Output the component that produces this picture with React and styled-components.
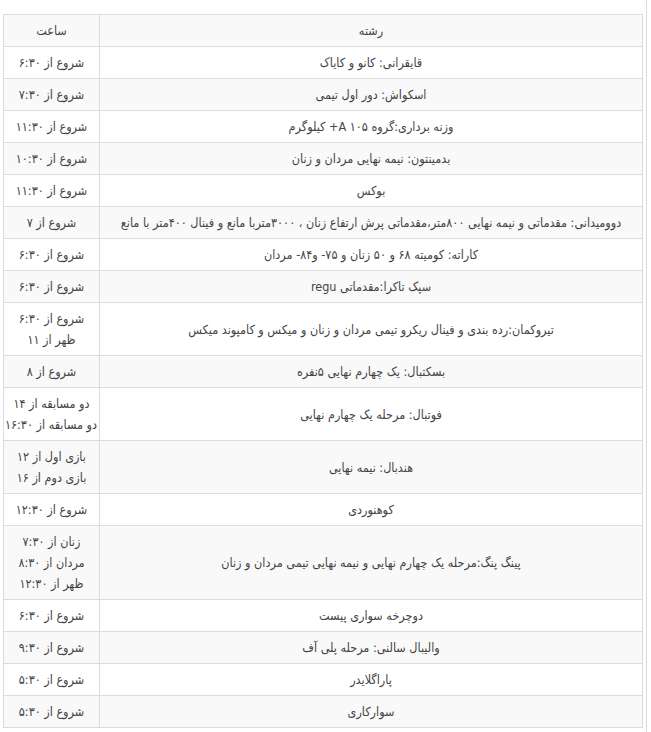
import React from "react";
import styled, { createGlobalStyle } from "styled-components";

const Global = createGlobalStyle`
  html, body { margin: 0; padding: 0; background: #fff; }
  body { font-family: "DejaVu Sans Condensed", "DejaVu Sans", sans-serif; }
`;

const Page = styled.div`
  width: 647px;
  min-height: 732px;
  box-sizing: border-box;
  border-right: 1px solid #dcdcdc;
  padding: 14px 4px 0 3px;
`;

const Table = styled.table`
  direction: rtl;
  width: 640px;
  table-layout: fixed;
  border-collapse: collapse;
  border: 1px solid #dcdcdc;
  font-size: 12.5px;
  color: #444;
`;

const TimeCol = styled.col`
  width: 96px;
`;

const Row = styled.tr`
  background: ${(p) => (p.$shade ? "#f9f9f9" : "#fff")};
`;

const Cell = styled.td`
  border: 1px solid #dcdcdc;
  padding: 5px 2px;
  line-height: 21px;
  text-align: center;
  vertical-align: middle;
  white-space: nowrap;
`;

const HeadCell = styled(Cell).attrs({ as: "th" })`
  font-weight: normal;
`;

const Line = styled.div``;

const rows = [
  ["قایقرانی: کانو و کایاک", ["شروع از ۶:۳۰"]],
  ["اسکواش: دور اول تیمی", ["شروع از ۷:۳۰"]],
  ["وزنه برداری:گروه ۱۰۵ A+ کیلوگرم", ["شروع از ۱۱:۳۰"]],
  ["بدمینتون: نیمه نهایی مردان و زنان", ["شروع از ۱۰:۳۰"]],
  ["بوکس", ["شروع از ۱۱:۳۰"]],
  [
    "دوومیدانی: مقدماتی و نیمه نهایی ۸۰۰متر،مقدماتی پرش ارتفاع زنان ، ۳۰۰۰متربا مانع و فینال ۴۰۰متر با مانع",
    ["شروع از ۷"],
  ],
  ["کاراته: کومیته ۶۸ و ۵۰ زنان و ۷۵- و۸۴- مردان", ["شروع از ۶:۳۰"]],
  ["سپک تاکرا:مقدماتی regu", ["شروع از ۶:۳۰"]],
  [
    "تیروکمان:رده بندی و فینال ریکرو تیمی مردان و زنان و میکس و کامپوند میکس",
    ["شروع از ۶:۳۰", "ظهر از ۱۱"],
  ],
  ["بسکتبال: یک چهارم نهایی ۵نفره", ["شروع از ۸"]],
  ["فوتبال: مرحله یک چهارم نهایی", ["دو مسابقه از ۱۴", "دو مسابقه از ۱۶:۳۰"]],
  ["هندبال: نیمه نهایی", ["بازی اول از ۱۲", "بازی دوم از ۱۶"]],
  ["کوهنوردی", ["شروع از ۱۲:۳۰"]],
  [
    "پینگ پنگ:مرحله یک چهارم نهایی و نیمه نهایی تیمی مردان و زنان",
    ["زنان از ۷:۳۰", "مردان از ۸:۳۰", "ظهر از ۱۲:۳۰"],
  ],
  ["دوچرخه سواری پیست", ["شروع از ۶:۳۰"]],
  ["والیبال سالنی: مرحله پلی آف", ["شروع از ۹:۳۰"]],
  ["پاراگلایدر", ["شروع از ۵:۳۰"]],
  ["سوارکاری", ["شروع از ۵:۳۰"]],
];

export default function App() {
  return (
    <>
      <Global />
      <Page>
        <Table>
          <colgroup>
            <col />
            <TimeCol />
          </colgroup>
          <thead>
            <Row $shade>
              <HeadCell>رشته</HeadCell>
              <HeadCell>ساعت</HeadCell>
            </Row>
          </thead>
          <tbody>
            {rows.map(([sport, times], i) => (
              <Row key={i} $shade={i % 2 === 1}>
                <Cell>{sport}</Cell>
                <Cell>
                  {times.map((t, j) => (
                    <Line key={j}>{t}</Line>
                  ))}
                </Cell>
              </Row>
            ))}
          </tbody>
        </Table>
      </Page>
    </>
  );
}
